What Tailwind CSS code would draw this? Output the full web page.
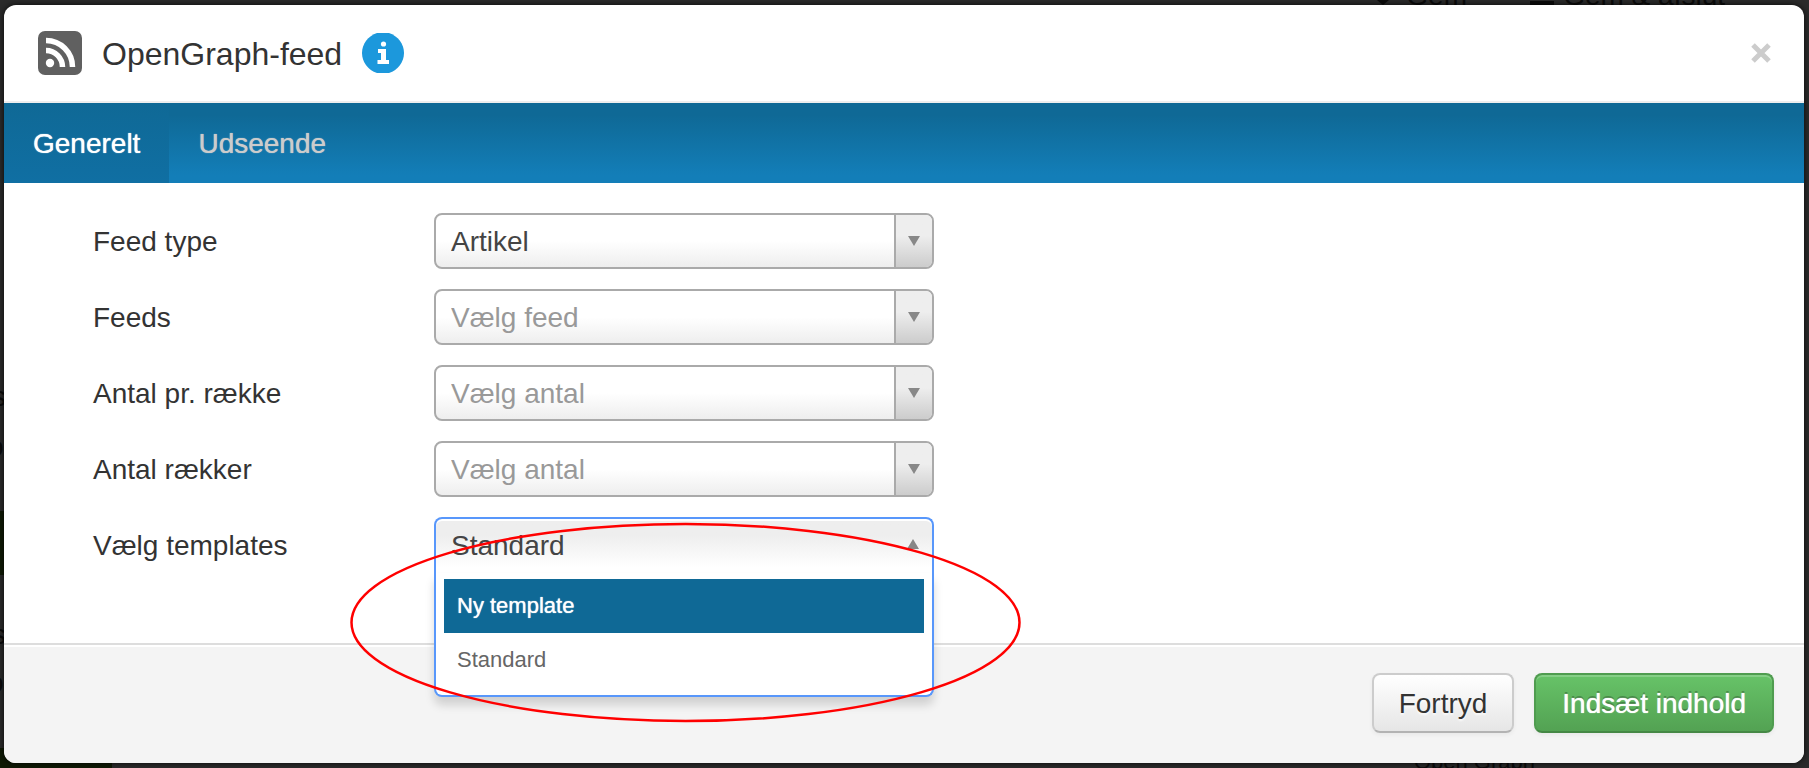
<!DOCTYPE html>
<html lang="da">
<head>
  <meta charset="UTF-8" />
  <meta name="viewport" content="width=device-width, initial-scale=1.0" />
  <title>OpenGraph-feed</title>
  <script src="https://cdn.jsdelivr.net/npm/@tailwindcss/browser@4"></script>
</head>
<body class="relative min-h-screen overflow-hidden bg-[#2b2b2b] pt-[5px] pr-[5px] pb-[5px] pl-1 font-['Liberation_Sans',Arial,sans-serif] text-[28px] leading-9 text-[#333]">

  <!-- dimmed page behind the dialog -->
  <div class="absolute inset-0 overflow-hidden text-[#0c0c0c]" aria-hidden="true">
    <span class="absolute -top-5 right-[342px] leading-8">Gem</span>
    <span class="absolute -top-5 right-[84px] leading-8">Gem &amp; afslut</span>
    <span class="absolute top-0 right-[420px] h-[5px] w-3 bg-[#0c0c0c] [clip-path:polygon(0_0,100%_0,50%_100%)]"></span>
    <span class="absolute top-px right-[255px] h-1 w-6 bg-[#0c0c0c]"></span>
    <span class="absolute right-[274px] -bottom-2.5 text-[22px] leading-8">Open Graph</span>
    <span class="absolute top-[381px] -left-2 leading-8">s</span>
    <span class="absolute top-[431px] -left-3 leading-8">o</span>
    <span class="absolute top-[511px] left-0 h-16 w-1 bg-[#0f1a05]"></span>
    <span class="absolute top-[619px] -left-2 leading-8">s</span>
    <span class="absolute top-[667px] -left-3 leading-8">o</span>
    <span class="absolute bottom-0 left-0 h-5 w-28 bg-[#0f1a05]"></span>
  </div>

  <div class="relative rounded-xl bg-white shadow-[0_0_6px_rgba(0,0,0,0.8)]" role="dialog" aria-labelledby="dialogTitle">

    <header class="flex h-[98px] items-center gap-5 border-b-2 border-[#eee] pr-[33px] pl-[34px]">
      <svg class="size-11" viewBox="0 0 44 44" fill="none">
        <rect width="44" height="44" rx="7" fill="#606060" />
        <circle cx="12" cy="32" r="4.2" fill="#fff" />
        <path d="M8 19.500A16.500 16.500 0 0 1 24.500 36M8 9.500A26.500 26.500 0 0 1 34.500 36" stroke="#fff" stroke-width="5.500" />
      </svg>
      <h1 id="dialogTitle" class="pt-0.5 text-[32px] leading-10">OpenGraph-feed</h1>
      <button type="button" aria-label="Info">
        <svg class="h-10 w-[42px]" viewBox="0 0 42 40">
          <path d="M15 0H27C36 3 42 11 42 20S36 37 27 40H15C6 37 0 29 0 20S6 3 15 0Z" fill="#1c98dc" />
          <circle cx="21.500" cy="11" r="2.600" fill="#fff" />
          <path d="M16 16H24V27H27V31H15.500V27H19V20H16Z" fill="#fff" />
        </svg>
      </button>
      <button type="button" aria-label="Luk" class="ml-auto">
        <svg class="size-5" viewBox="0 0 20 20" stroke="#ccc" stroke-width="5">
          <path d="M2 2L18 18M18 2L2 18" />
        </svg>
      </button>
    </header>

    <nav class="flex h-20 bg-linear-to-b from-[#0f6996] from-15% to-[#137eb8] to-90%">
      <a href="#generelt" class="flex items-center bg-linear-to-b from-[#0f6996] to-[#106fa3] px-[29px] pt-0.5 text-white [text-shadow:0_0_1px_#fff]">Generelt</a>
      <a href="#udseende" class="flex items-center px-[29px] pt-0.5 text-[#ccc] [text-shadow:0_0_1px_#ccc]">Udseende</a>
    </nav>

    <form id="feedForm" class="grid grid-cols-[341px_500px] gap-y-5 pt-[30px] pb-[70px] pl-[89px]">
      <label for="feedType" class="self-center pt-0.5">Feed type</label>
      <div class="relative">
        <select id="feedType" class="h-14 w-full appearance-none rounded-lg border-2 border-[#aaa] bg-linear-to-t from-[#eee] to-white to-50% pt-0.5 pr-12 pl-[15px] text-[#444]">
          <option>Artikel</option>
        </select>
        <span class="pointer-events-none absolute inset-y-0.5 right-0.5 flex w-[38px] items-center justify-center rounded-r-md border-l-2 border-[#aaa] bg-linear-to-t from-[#ccc] to-[#eee] to-60%">
          <svg class="h-2.5 w-3" viewBox="0 0 12 10"><path d="M0 0H12L6 10Z" fill="#888" /></svg>
        </span>
      </div>

      <label for="feeds" class="self-center pt-0.5">Feeds</label>
      <div class="relative">
        <select id="feeds" class="h-14 w-full appearance-none rounded-lg border-2 border-[#aaa] bg-linear-to-t from-[#eee] to-white to-50% pt-0.5 pr-12 pl-[15px] text-[#999]">
          <option>Vælg feed</option>
        </select>
        <span class="pointer-events-none absolute inset-y-0.5 right-0.5 flex w-[38px] items-center justify-center rounded-r-md border-l-2 border-[#aaa] bg-linear-to-t from-[#ccc] to-[#eee] to-60%">
          <svg class="h-2.5 w-3" viewBox="0 0 12 10"><path d="M0 0H12L6 10Z" fill="#888" /></svg>
        </span>
      </div>

      <label for="perRow" class="self-center pt-0.5">Antal pr. række</label>
      <div class="relative">
        <select id="perRow" class="h-14 w-full appearance-none rounded-lg border-2 border-[#aaa] bg-linear-to-t from-[#eee] to-white to-50% pt-0.5 pr-12 pl-[15px] text-[#999]">
          <option>Vælg antal</option>
        </select>
        <span class="pointer-events-none absolute inset-y-0.5 right-0.5 flex w-[38px] items-center justify-center rounded-r-md border-l-2 border-[#aaa] bg-linear-to-t from-[#ccc] to-[#eee] to-60%">
          <svg class="h-2.5 w-3" viewBox="0 0 12 10"><path d="M0 0H12L6 10Z" fill="#888" /></svg>
        </span>
      </div>

      <label for="rows" class="self-center pt-0.5">Antal rækker</label>
      <div class="relative">
        <select id="rows" class="h-14 w-full appearance-none rounded-lg border-2 border-[#aaa] bg-linear-to-t from-[#eee] to-white to-50% pt-0.5 pr-12 pl-[15px] text-[#999]">
          <option>Vælg antal</option>
        </select>
        <span class="pointer-events-none absolute inset-y-0.5 right-0.5 flex w-[38px] items-center justify-center rounded-r-md border-l-2 border-[#aaa] bg-linear-to-t from-[#ccc] to-[#eee] to-60%">
          <svg class="h-2.5 w-3" viewBox="0 0 12 10"><path d="M0 0H12L6 10Z" fill="#888" /></svg>
        </span>
      </div>

      <label for="template" class="self-center pt-0.5">Vælg templates</label>
      <div class="relative z-10">
        <button type="button" id="template" aria-haspopup="listbox" aria-expanded="true" class="flex h-14 w-full items-center justify-between rounded-t-lg border-2 border-b-0 border-[#5897fb] bg-linear-to-b from-[#eee] from-30% to-white to-90% pr-[13px] pl-[15px] text-[#444] shadow-[inset_0_2px_0_#fff]">
          Standard
          <svg class="mb-1 h-2.5 w-3" viewBox="0 0 12 10"><path d="M0 10H12L6 0Z" fill="#888" /></svg>
        </button>
        <ul role="listbox" aria-labelledby="template" class="absolute inset-x-0 top-full rounded-b-lg border-2 border-t-0 border-[#5897fb] bg-white px-2 pt-1.5 pb-2 text-[22px] text-[#666] shadow-[0_8px_10px_rgba(0,0,0,0.15)]">
          <li role="option" class="flex h-[54px] items-center bg-[#0f6996] px-[13px] text-white [text-shadow:0_0_1px_#fff]">Ny template</li>
          <li role="option" aria-selected="true" class="flex h-[54px] items-center px-[13px]">Standard</li>
        </ul>
        <!-- red ring around the open list -->
        <svg class="pointer-events-none absolute top-[5px] -left-[84px] h-[201px] w-[671px]" viewBox="0 0 671 201" fill="none">
          <ellipse cx="335.500" cy="100.500" rx="334" ry="98.500" stroke="#f00" stroke-width="2.500" />
        </svg>
      </div>
    </form>

    <footer class="flex justify-end gap-5 rounded-b-xl border-t-2 border-[#ddd] bg-[#f4f4f4] pt-7 pr-[30px] pb-[30px] shadow-[inset_0_2px_0_#fff]">
      <button type="button" class="h-[60px] rounded-lg border-2 border-[#ccc] border-b-[#b3b3b3] bg-linear-to-b from-white to-[#e6e6e6] px-[25px] pt-0.5 shadow-[0_2px_4px_rgba(0,0,0,0.05)] [text-shadow:0_2px_2px_rgba(255,255,255,0.75)]">Fortryd</button>
      <button type="submit" form="feedForm" class="h-[60px] rounded-lg border-2 border-[#4f9c4f] border-b-[#458845] bg-linear-to-b from-[#67c368] to-[#53a253] px-[26px] pt-0.5 text-white shadow-[inset_0_2px_0_rgba(255,255,255,0.2),0_2px_4px_rgba(0,0,0,0.05)] [text-shadow:0_0_1px_#fff,0_-2px_0_rgba(0,0,0,0.25)]">Indsæt indhold</button>
    </footer>
  </div>

</body>
</html>
